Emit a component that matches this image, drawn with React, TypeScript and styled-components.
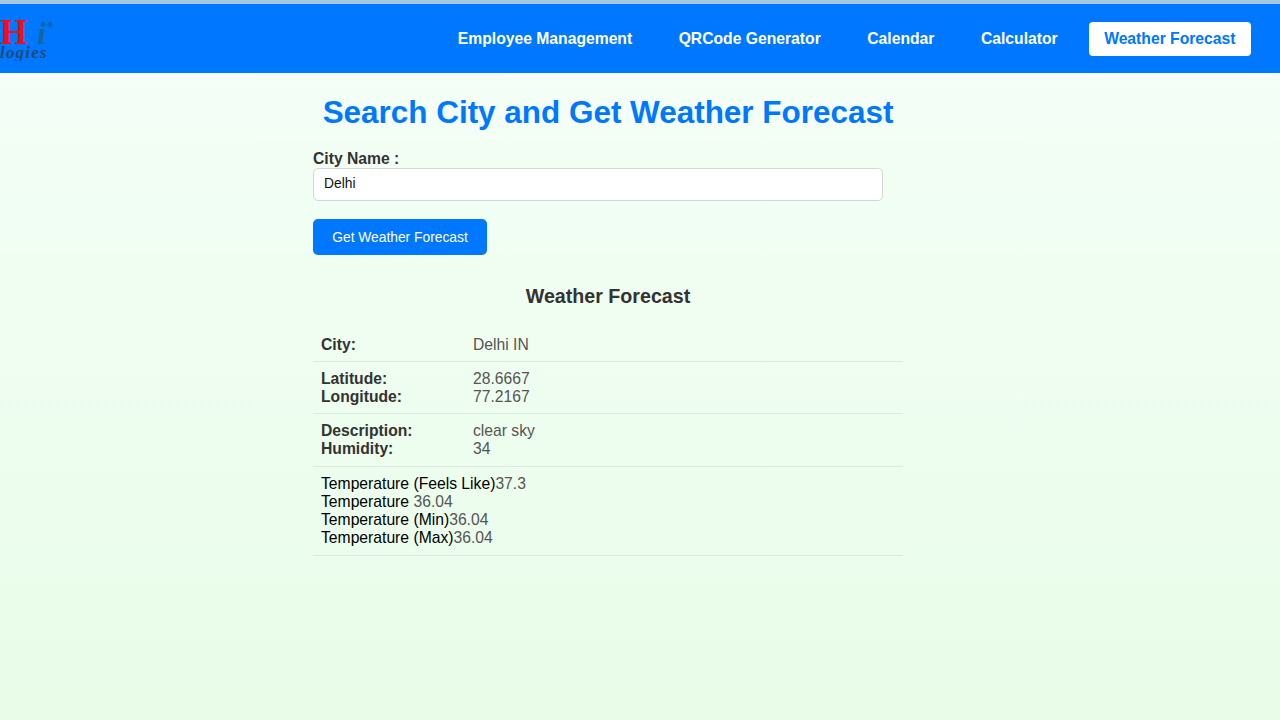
import { createGlobalStyle, styled } from "styled-components";

const GlobalStyle = createGlobalStyle`
  html, body {
    margin: 0;
    padding: 0;
    height: 100%;
  }
  body {
    font-family: "Liberation Sans", Arial, sans-serif;
    background: linear-gradient(180deg, #f5fff8 0%, #e8fce8 100%);
    background-repeat: no-repeat;
    min-height: 720px;
    overflow: hidden;
  }
`;

const TopStrip = styled.div`
  height: 4px;
  background-color: #a6c8de;
`;

const Navbar = styled.nav`
  height: 69px;
  background-color: #0077ff;
  display: flex;
  align-items: center;
  justify-content: space-between;
  padding-right: 29px;
`;

const Logo = styled.div`
  width: 60px;
  height: 44px;
  overflow: hidden;
  display: flex;
  flex-direction: column;
  font-family: "Liberation Serif", serif;
  font-weight: bold;
`;

const LogoTop = styled.div`
  display: flex;
  align-items: baseline;
  height: 29px;
  line-height: 31px;
`;

const LogoH = styled.span`
  color: #f00d1c;
  font-size: 35px;
`;

const LogoI = styled.span`
  color: #15669f;
  font-size: 31px;
  font-style: italic;
  margin-left: 10px;
`;

const LogoMark = styled.span`
  color: #0f4f85;
  font-size: 9px;
  line-height: 9px;
  align-self: flex-start;
  margin-top: 4px;
  margin-left: 1px;
`;

const LogoBottom = styled.div`
  color: #1b4a78;
  font-size: 17px;
  font-style: italic;
  line-height: 14px;
  letter-spacing: 1.2px;
  white-space: nowrap;
`;

const NavLinks = styled.div`
  display: flex;
  align-items: center;
  gap: 15.5px;
`;

const NavLink = styled.a<{ $active?: boolean }>`
  display: block;
  padding: 8px 15.5px;
  height: 34px;
  box-sizing: border-box;
  line-height: 18px;
  font-size: 15.7px;
  font-weight: bold;
  border-radius: 4px;
  color: ${(p) => (p.$active ? "#0077ff" : "#ffffff")};
  background-color: ${(p) => (p.$active ? "#ffffff" : "transparent")};
`;

const Main = styled.main`
  width: 590px;
  margin-left: 313px;
  color: #333333;
`;

const Title = styled.h1`
  margin: 21px 0 0;
  font-size: 31.45px;
  line-height: 37px;
  font-weight: bold;
  text-align: center;
  color: #0077ff;
`;

const Label = styled.label`
  display: block;
  margin-top: 19px;
  font-size: 15.7px;
  line-height: 18px;
  font-weight: bold;
`;

const CityInput = styled.input`
  display: block;
  width: 570px;
  height: 33px;
  box-sizing: border-box;
  padding: 0 10px 2px;
  background-color: #ffffff;
  border: 1px solid #d4d8d4;
  border-radius: 5px;
  font-family: inherit;
  font-size: 13.8px;
  color: #111111;
  outline: none;
`;

const SubmitButton = styled.button`
  display: block;
  margin-top: 18px;
  width: 174px;
  height: 36px;
  background-color: #0077ff;
  color: #ffffff;
  border: none;
  border-radius: 5px;
  font-family: inherit;
  font-size: 13.8px;
  padding: 0;
`;

const Subtitle = styled.h3`
  margin: 30px 0 0;
  font-size: 19.65px;
  line-height: 23px;
  font-weight: bold;
  text-align: center;
`;

const ForecastTable = styled.table`
  width: 100%;
  margin-top: 18px;
  border-collapse: collapse;
  font-size: 15.7px;
  line-height: 18px;

  tr:first-child td {
    padding-top: 10px;
    padding-bottom: 7px;
  }
  tr:nth-child(2) td {
    padding-bottom: 7px;
  }
`;

const Row = styled.tr`
  border-bottom: 1px solid #dfe8df;
`;

const Cell = styled.td`
  padding: 8px;
  vertical-align: top;
`;

const HeadCell = styled(Cell)`
  width: 136px;
  font-weight: bold;
`;

const Value = styled(Cell)`
  color: #555555;
`;

const TempCell = styled.td`
  padding: 8px;
  color: #555555;
`;

const TempLabel = styled.span`
  color: #000000;
`;

const temps = [
  { label: "Temperature (Feels Like)", value: "37.3" },
  { label: "Temperature ", value: "36.04" },
  { label: "Temperature (Min)", value: "36.04" },
  { label: "Temperature (Max)", value: "36.04" },
];

export default function App() {
  return (
    <>
      <GlobalStyle />
      <TopStrip />
      <Navbar>
        <Logo>
          <LogoTop>
            <LogoH>H</LogoH>
            <LogoI>i</LogoI>
            <LogoMark>®</LogoMark>
          </LogoTop>
          <LogoBottom>logies</LogoBottom>
        </Logo>
        <NavLinks>
          <NavLink>Employee Management</NavLink>
          <NavLink>QRCode Generator</NavLink>
          <NavLink>Calendar</NavLink>
          <NavLink>Calculator</NavLink>
          <NavLink $active>Weather Forecast</NavLink>
        </NavLinks>
      </Navbar>
      <Main>
        <Title>Search City and Get Weather Forecast</Title>
        <Label htmlFor="city">City Name :</Label>
        <CityInput id="city" defaultValue="Delhi" />
        <SubmitButton>Get Weather Forecast</SubmitButton>
        <Subtitle>Weather Forecast</Subtitle>
        <ForecastTable>
          <tbody>
            <Row>
              <HeadCell>City:</HeadCell>
              <Value>Delhi IN</Value>
            </Row>
            <Row>
              <HeadCell>
                Latitude:
                <br />
                Longitude:
              </HeadCell>
              <Value>
                28.6667
                <br />
                77.2167
              </Value>
            </Row>
            <Row>
              <HeadCell>
                Description:
                <br />
                Humidity:
              </HeadCell>
              <Value>
                clear sky
                <br />
                34
              </Value>
            </Row>
            <Row>
              <TempCell colSpan={2}>
                {temps.map((t) => (
                  <div key={t.label}>
                    <TempLabel>{t.label}</TempLabel>
                    {t.value}
                  </div>
                ))}
              </TempCell>
            </Row>
          </tbody>
        </ForecastTable>
      </Main>
    </>
  );
}
